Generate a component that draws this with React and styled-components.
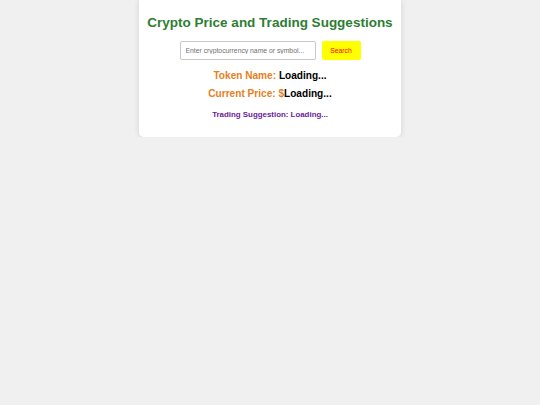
import React from "react";
import styled, { createGlobalStyle } from "styled-components";

const Global = createGlobalStyle`
  html, body { margin: 0; padding: 0; background: #f0f0f0; }
  body { font-family: "Liberation Sans", Arial, sans-serif; }
`;

const Card = styled.div`
  width: 262px;
  margin: 0 auto;
  box-sizing: border-box;
  background: #fff;
  border-radius: 0 0 5px 5px;
  box-shadow: 0 0 6px rgba(0, 0, 0, 0.12);
  padding: 12px 8px 13px;
  display: flex;
  flex-direction: column;
  align-items: center;
  text-align: center;
`;

const Title = styled.h1`
  margin: 0;
  font-size: 13.5px;
  line-height: 21px;
  font-weight: 700;
  color: #2e7d32;
  white-space: nowrap;
`;

const SearchRow = styled.div`
  display: flex;
  align-items: center;
  gap: 6px;
  margin-top: 8px;
`;

const Input = styled.input`
  width: 136px;
  height: 19px;
  box-sizing: border-box;
  border: 1px solid #c8c8c8;
  border-radius: 2px;
  padding: 0 5px;
  font-family: "Liberation Sans", Arial, sans-serif;
  font-size: 6.8px;
  color: #333;
  outline: none;
  &::placeholder { color: #707070; }
`;

const Button = styled.button`
  height: 19px;
  width: 39px;
  border: none;
  border-radius: 2px;
  background: #ffff00;
  color: #ff0000;
  font-family: "Liberation Sans", Arial, sans-serif;
  font-size: 6.8px;
  padding: 0;
  cursor: pointer;
`;

const InfoLine = styled.div`
  font-size: ${(p) => p.$size || 10.1}px;
  font-weight: 700;
  line-height: 18px;
  color: ${(p) => p.$color || "#000"};
  margin-top: ${(p) => p.$mt || 0}px;
`;

const Label = styled.span`
  color: #e67e22;
`;

const Value = styled.span`
  color: #000;
`;

export default function App() {
  return (
    <>
      <Global />
      <Card>
        <Title>Crypto Price and Trading Suggestions</Title>
        <SearchRow>
          <Input placeholder="Enter cryptocurrency name or symbol..." />
          <Button>Search</Button>
        </SearchRow>
        <InfoLine $mt={7}>
          <Label>Token Name: </Label>
          <Value>Loading...</Value>
        </InfoLine>
        <InfoLine>
          <Label>Current Price: $</Label>
          <Value>Loading...</Value>
        </InfoLine>
        <InfoLine $color="#6a1b9a" $mt={3} $size={7.9}>
          Trading Suggestion: Loading...
        </InfoLine>
      </Card>
    </>
  );
}
